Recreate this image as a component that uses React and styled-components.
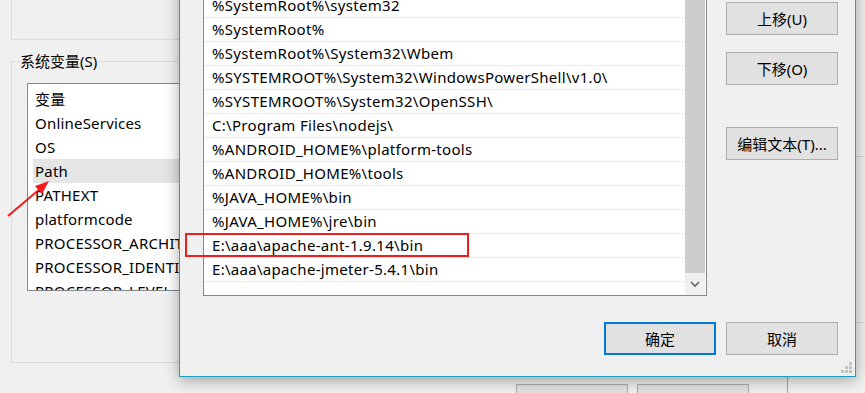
import styled, { createGlobalStyle } from 'styled-components';

const GlobalStyle = createGlobalStyle`
  html, body {
    margin: 0;
    padding: 0;
  }
  body {
    width: 865px;
    height: 393px;
    overflow: hidden;
    background: #f4f4f4;
    font-family: "Noto Sans", "Noto Sans CJK SC", sans-serif;
    color: #000;
  }
`;

const systemVars = [
  'OnlineServices',
  'OS',
  'Path',
  'PATHEXT',
  'platformcode',
  'PROCESSOR_ARCHITECTURE',
  'PROCESSOR_IDENTIFIER',
  'PROCESSOR_LEVEL',
];

const pathEntries = [
  'C:\\ProgramData\\Oracle\\Java\\javapath',
  '%SystemRoot%\\system32',
  '%SystemRoot%',
  '%SystemRoot%\\System32\\Wbem',
  '%SYSTEMROOT%\\System32\\WindowsPowerShell\\v1.0\\',
  '%SYSTEMROOT%\\System32\\OpenSSH\\',
  'C:\\Program Files\\nodejs\\',
  '%ANDROID_HOME%\\platform-tools',
  '%ANDROID_HOME%\\tools',
  '%JAVA_HOME%\\bin',
  '%JAVA_HOME%\\jre\\bin',
  'E:\\aaa\\apache-ant-1.9.14\\bin',
  'E:\\aaa\\apache-jmeter-5.4.1\\bin',
];

const App = () => (
  <Page>
    <GlobalStyle />
    <BgWindow>
      <TopGroup />
      <Group>
        <Legend>系统变量(S)</Legend>
        <VarList>
          <VarRow>变量</VarRow>
          {systemVars.map((name) => (
            <VarRow key={name} selected={name === 'Path'}>
              {name}
            </VarRow>
          ))}
        </VarList>
      </Group>
      <BgFooter>
        <Button />
        <Button />
      </BgFooter>
    </BgWindow>
    <Desk>
      <DeskPanel />
    </Desk>

    <Dialog>
      <Main>
        <PathList>
          <Rows>
            {pathEntries.map((entry) => (
              <PathRow key={entry}>{entry}</PathRow>
            ))}
          </Rows>
          <ScrollBar>
            <Thumb />
            <ArrowButton>
              <svg width="10" height="6" viewBox="0 0 10 6">
                <path d="M1 1 L5 5 L9 1" fill="none" stroke="#606060" strokeWidth="1.6" />
              </svg>
            </ArrowButton>
          </ScrollBar>
        </PathList>
        <Side>
          <Button>上移(U)</Button>
          <Button>下移(O)</Button>
          <Button spaced>编辑文本(T)...</Button>
        </Side>
      </Main>
      <Footer>
        <Button primary>确定</Button>
        <Button>取消</Button>
      </Footer>
      <Grip width="12" height="12" viewBox="0 0 12 12">
        <rect x="8" y="0" width="3" height="3" fill="#c2c2c2" />
        <rect x="4" y="4" width="3" height="3" fill="#c2c2c2" />
        <rect x="8" y="4" width="3" height="3" fill="#c2c2c2" />
        <rect x="0" y="8" width="3" height="3" fill="#c2c2c2" />
        <rect x="4" y="8" width="3" height="3" fill="#c2c2c2" />
        <rect x="8" y="8" width="3" height="3" fill="#c2c2c2" />
      </Grip>
    </Dialog>

    <Highlight />
    <Arrow width="60" height="60" viewBox="0 170 60 60">
      <line x1="8" y1="216" x2="41" y2="188" stroke="#f21c1c" strokeWidth="2" />
      <polygon points="49,181 42,194 35,186" fill="#f21c1c" />
    </Arrow>
  </Page>
);

export default App;

const Page = styled.div`
  position: relative;
  display: flex;
  width: 865px;
  height: 393px;
  overflow: hidden;
`;

const BgWindow = styled.div`
  flex: none;
  display: flex;
  flex-direction: column;
  box-sizing: border-box;
  width: 788px;
  height: 393px;
  padding-left: 11px;
  background: #f0f0f0;
  border-right: 1px solid #a3a3a3;
`;

const TopGroup = styled.div`
  flex: none;
  box-sizing: border-box;
  width: 700px;
  height: 40px;
  border-left: 1px solid #dcdcdc;
  border-bottom: 1px solid #dcdcdc;
`;

const Group = styled.fieldset`
  flex: none;
  box-sizing: border-box;
  width: 700px;
  height: 312px;
  min-width: 0;
  margin: 11px 0 0;
  padding: 0;
  border: 1px solid #dcdcdc;
`;

const Legend = styled.legend`
  margin-left: 8px;
  padding: 0 2px 0 0;
  font-size: 15px;
  line-height: 20px;
`;

const VarList = styled.div`
  box-sizing: border-box;
  width: 320px;
  height: 208px;
  margin: 12px 0 0 15px;
  padding: 3px 0 0 5px;
  overflow: hidden;
  background: #fff;
  border: 1px solid #828790;
`;

const VarRow = styled.div`
  height: 24px;
  padding-left: 2px;
  font-size: 15px;
  line-height: 24px;
  letter-spacing: 0.2px;
  white-space: nowrap;
  background: ${(p) => (p.selected ? '#e5e5e5' : 'transparent')};
`;

const BgFooter = styled.div`
  display: flex;
  justify-content: flex-end;
  gap: 9px;
  margin-top: 21px;
  padding-right: 38px;
`;

const Desk = styled.div`
  flex: 1;
  padding-top: 156px;
  background: #f2f2f2;
`;

const DeskPanel = styled.div`
  height: 165px;
  border-top: 1px solid #d3d3d3;
  border-bottom: 1px solid #d3d3d3;
`;

const Dialog = styled.div`
  position: absolute;
  left: 179px;
  top: -50px;
  box-sizing: border-box;
  width: 677px;
  height: 427px;
  display: flex;
  flex-direction: column;
  padding: 18px 17px 0 23px;
  background: #f0f0f0;
  border: 1px solid #1ca0c8;
  box-shadow: 0 3px 14px rgba(0, 0, 0, 0.35);
`;

const Main = styled.div`
  display: flex;
`;

const PathList = styled.div`
  flex: none;
  display: flex;
  box-sizing: border-box;
  width: 504px;
  height: 327px;
  padding-right: 1px;
  background: #fff;
  border: 1px solid #828790;
  overflow: hidden;
`;

const Rows = styled.div`
  flex: 1;
  overflow: hidden;
`;

const PathRow = styled.div`
  box-sizing: border-box;
  height: 24px;
  padding-left: 8px;
  font-size: 15px;
  line-height: 23px;
  letter-spacing: 0.3px;
  white-space: nowrap;
  border-bottom: 1px solid #ebebeb;
`;

const ScrollBar = styled.div`
  flex: none;
  display: flex;
  flex-direction: column;
  width: 20px;
  background: #f0f0f0;
`;

const Thumb = styled.div`
  flex: 1;
  background: #cdcdcd;
`;

const ArrowButton = styled.div`
  flex: none;
  display: flex;
  align-items: center;
  justify-content: center;
  height: 22px;
`;

const Side = styled.div`
  flex: 1;
  display: flex;
  flex-direction: column;
  align-items: flex-start;
  gap: 17px;
  padding: 33px 0 0 19px;
`;

const Button = styled.button`
  flex: none;
  box-sizing: border-box;
  width: 112px;
  height: 33px;
  margin: 0;
  margin-top: ${(p) => (p.spaced ? '25px' : '0')};
  padding: 0;
  font-family: inherit;
  font-size: 15px;
  color: #000;
  background: #e1e1e1;
  border: ${(p) => (p.primary ? '2px solid #0078d7' : '1px solid #adadad')};
  border-radius: 0;
`;

const Footer = styled.div`
  display: flex;
  justify-content: flex-end;
  gap: 10px;
  margin-top: 26px;
`;

const Grip = styled.svg`
  position: absolute;
  right: 2px;
  bottom: 2px;
`;

const Highlight = styled.div`
  position: absolute;
  left: 185px;
  top: 233px;
  box-sizing: border-box;
  width: 284px;
  height: 24px;
  border: 2px solid #f01d1d;
`;

const Arrow = styled.svg`
  position: absolute;
  left: 0;
  top: 170px;
`;
